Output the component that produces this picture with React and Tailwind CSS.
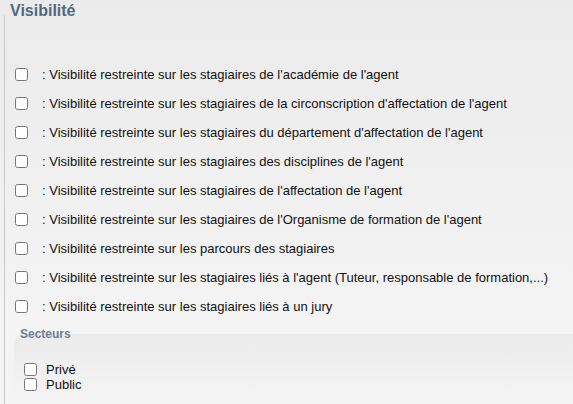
const options = [
  "Visibilité restreinte sur les stagiaires de l'académie de l'agent",
  "Visibilité restreinte sur les stagiaires de la circonscription d'affectation de l'agent",
  "Visibilité restreinte sur les stagiaires du département d'affectation de l'agent",
  'Visibilité restreinte sur les stagiaires des disciplines de l\'agent',
  "Visibilité restreinte sur les stagiaires de l'affectation de l'agent",
  "Visibilité restreinte sur les stagiaires de l'Organisme de formation de l'agent",
  'Visibilité restreinte sur les parcours des stagiaires',
  "Visibilité restreinte sur les stagiaires liés à l'agent (Tuteur, responsable de formation,...)",
  'Visibilité restreinte sur les stagiaires liés à un jury',
];

const secteurs = ['Privé', 'Public'];

export default function App() {
  return (
    <div
      className="min-h-[404px] overflow-hidden bg-gradient-to-b from-[#ebebeb] to-[#f4f4f4] to-[330px] pl-[4px] pt-[1px] text-[#111]"
      style={{ fontFamily: '"Liberation Sans", Arial, sans-serif' }}
    >
      <fieldset className="min-w-0 border-l border-t border-l-[#c9c9c9] border-t-transparent rounded-tl-[8px]">
        <legend className="px-[5px] text-[16px] leading-[19px] font-bold text-[#51697d]">Visibilité</legend>

        <div className="mt-[40px] pl-[10px]">
          {options.map((label) => (
            <label key={label} className="flex h-[29px] items-center text-[13px]">
              <input type="checkbox" className="h-[13px] w-[13px] shrink-0" />
              <span className="ml-[14px]">: {label}</span>
            </label>
          ))}
        </div>

        <fieldset className="mt-[6px] ml-[9px] min-w-0 min-h-[80px] rounded-tl-[10px] bg-gradient-to-b from-[#ebebeb] to-[#f5f5f5] pb-[14px]">
          <legend className="px-[6px] text-[12px] leading-[14px] font-bold text-[#6f7f8d]">Secteurs</legend>
          <div className="mt-[21px] pl-[10px]">
            {secteurs.map((s) => (
              <label key={s} className="flex h-[15px] items-center text-[13px]">
                <input type="checkbox" className="h-[13px] w-[13px] shrink-0" />
                <span className="ml-[9px]">{s}</span>
              </label>
            ))}
          </div>
        </fieldset>
      </fieldset>
    </div>
  );
}
